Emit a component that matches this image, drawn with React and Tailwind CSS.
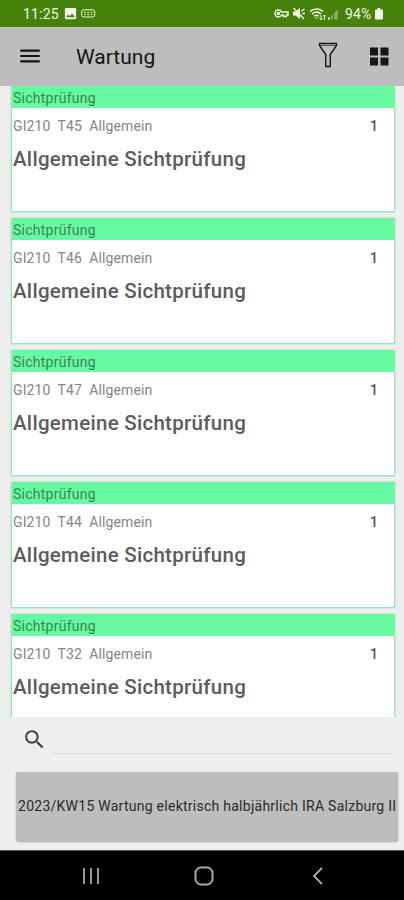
import React from 'react';
import { MdMenu, MdSearch, MdImage } from 'react-icons/md';

const tasks = ['T45', 'T46', 'T47', 'T44', 'T32'];

const StatusBar = () => (
  <div className="h-[27px] shrink-0 bg-[#468209] text-[#f0f7e8] flex items-center justify-between pl-[23px] pr-[20px]">
    <div className="flex items-center">
      <span className="w-[36px] text-[14px] leading-none tracking-[0.2px] whitespace-nowrap">11:25</span>
      <MdImage className="ml-[4px] w-[15px] h-[15px]" />
      <svg className="ml-[3px]" width="15" height="9" viewBox="0 0 15 9" fill="none" stroke="currentColor">
        <rect x="0.6" y="0.8" width="13.2" height="7.2" rx="2.2" />
        <path d="M3 3.4h2M6.3 3.4h2M9.6 3.4h2M3 5.6h2M6.3 5.6h2M9.6 5.6h2" strokeWidth="0.9" />
      </svg>
    </div>
    <div className="flex items-center">
      <svg width="15" height="11" viewBox="0 0 15 11" fill="none" stroke="currentColor" strokeWidth="1.5">
        <path d="M7.6 4C6.9 2.6 5.8 2 4.5 2a3.5 3.5 0 0 0 0 7C5.8 9 6.9 8.4 7.6 7H9.5v1.5h3V7H14V4z" />
        <circle cx="4.5" cy="5.5" r="1" />
      </svg>
      <svg className="ml-[3px]" width="14" height="13" viewBox="0 0 14 13">
        <path d="M1 4.5h2.5L8 1v11L3.5 8.5H1z" fill="currentColor" />
        <path d="M1.5 1l10.5 11M9.5 4l3-2M10 6.5h3" fill="none" stroke="currentColor" strokeWidth="1.3" />
      </svg>
      <svg className="ml-[3px]" width="18" height="14" viewBox="0 0 18 14" fill="none" stroke="currentColor" strokeWidth="1.5">
        <path d="M1 4.5C4.5 1 10.5 1 14 4.5M3 7C5.8 4.5 9.2 4.5 12 7M5.2 9.2C6.8 8 8.2 8 9.8 9.2" />
        <path d="M7.5 12l-1.3-1.6h2.6z" fill="currentColor" stroke="none" />
        <path d="M12 8v5M10.5 11.5l1.5 1.5 1.5-1.5M15.5 13V8M14 9.5L15.5 8 17 9.5" strokeWidth="1" />
      </svg>
      <svg width="12" height="12" viewBox="0 0 12 12">
        <path d="M1 11.5h2V9.5H1z" fill="currentColor" />
        <path d="M4 11.5V8l2-2v5.5zM7 11.5V5l4-4v10.5z" fill="#84ab60" />
      </svg>
      <span className="ml-[6px] w-[29px] text-[14px] leading-none tracking-[0.1px] whitespace-nowrap">94%</span>
      <svg width="10" height="12" viewBox="0 0 9 12" fill="currentColor">
        <path d="M3 0h3v1.5h1.5q1 0 1 1v8q0 1-1 1h-6q-1 0-1-1v-8q0-1 1-1H3z" />
      </svg>
    </div>
  </div>
);

const AppBar = () => (
  <header className="h-[59px] shrink-0 bg-[#bdbdbd] text-[#151515] flex items-center pl-[17px] pr-[15px]">
    <MdMenu className="w-[26px] h-[26px] -mt-[2px]" />
    <h1 className="ml-[33px] grow text-[21px] leading-[28px]">Wartung</h1>
    <svg className="mr-[31px] -mt-[4px]" width="20" height="26" viewBox="0 0 20 26" fill="none" stroke="currentColor" strokeWidth="1.4">
      <path d="M1.5 1.5h17v2L12.3 12.5v12h-4.6v-12L1.5 3.5z" />
      <path d="M2 3.5h16" strokeWidth="0.6" />
    </svg>
    <svg className="-mt-[2px]" width="20" height="20" viewBox="0 0 20 20" fill="currentColor">
      <path d="M1 1.5h8v8H1zM11.5 1.5h8v8h-8zM1 11.5h8v8H1zM11.5 11.5h8v8h-8z" />
    </svg>
  </header>
);

const TaskCard = ({ code }) => (
  <div className="h-[126px] shrink-0 bg-white border border-t-0 border-[#8fe8b5] rounded-b-[2px] shadow-[0_0_2px_rgba(60,190,120,0.5)]">
    <div className="h-[22px] bg-[#66f9a1] pl-px text-[14px] leading-[24px] tracking-[0.25px] text-[#3b8458]">Sichtprüfung</div>
    <div className="mt-[8px] pl-px pr-[16px] flex justify-between text-[14px] leading-[20px] text-[#858585]">
      <span className="whitespace-pre tracking-[0.13px]">{`GI210  ${code}  Allgemein`}</span>
      <span className="font-medium text-[#505050]">1</span>
    </div>
    <div className="mt-[9px] pl-px text-[20.5px] leading-[28px] font-medium tracking-[0.28px] text-[#5c5c5c]">Allgemeine Sichtprüfung</div>
  </div>
);

const NavBar = () => (
  <nav className="h-[50px] shrink-0 bg-black border-t border-[#555] text-[#a8a8a8] flex items-center pl-[82px]">
    <svg width="18" height="18" viewBox="0 0 18 18" fill="none" stroke="currentColor" strokeWidth="1.8">
      <path d="M2 1v16M9 1v16M16 1v16" />
    </svg>
    <svg className="ml-[94px]" width="20" height="20" viewBox="0 0 20 20" fill="none" stroke="currentColor" strokeWidth="2">
      <rect x="1.5" y="1.5" width="17" height="17" rx="5.5" />
    </svg>
    <svg className="ml-[97px]" width="14" height="20" viewBox="0 0 14 20" fill="none" stroke="currentColor" strokeWidth="1.9">
      <path d="M11 2L3 10l8 8" />
    </svg>
  </nav>
);

const App = () => {
  return (
    <div className="w-[404px] h-[900px] overflow-hidden flex flex-col bg-[#eeeeee] font-[Roboto,sans-serif]">
      <StatusBar />
      <AppBar />

      <main className="h-[631px] shrink-0 overflow-hidden flex flex-col gap-[6px] pl-[11px] pr-[9px]">
        {tasks.map((code) => (
          <TaskCard key={code} code={code} />
        ))}
      </main>

      <div className="h-[55px] shrink-0 flex pl-[22px] pr-[9px]">
        <MdSearch className="mt-[10px] w-[25px] h-[25px] text-[#424242]" />
        <div className="ml-[5px] h-[37px] grow border-b border-[#dcdcdc]" />
      </div>

      <div className="h-[78px] shrink-0 pl-[16px] pr-[6px]">
        <button className="block w-full h-[69px] rounded-[2px] bg-[#bdbdbd] shadow-[0_1px_2px_rgba(0,0,0,0.3)] text-left pl-[2px] text-[14px] tracking-[0.26px] text-[#2b2b2b] whitespace-nowrap">
          2023/KW15 Wartung elektrisch halbjährlich IRA Salzburg II
        </button>
      </div>

      <NavBar />
    </div>
  );
};

export default App;
